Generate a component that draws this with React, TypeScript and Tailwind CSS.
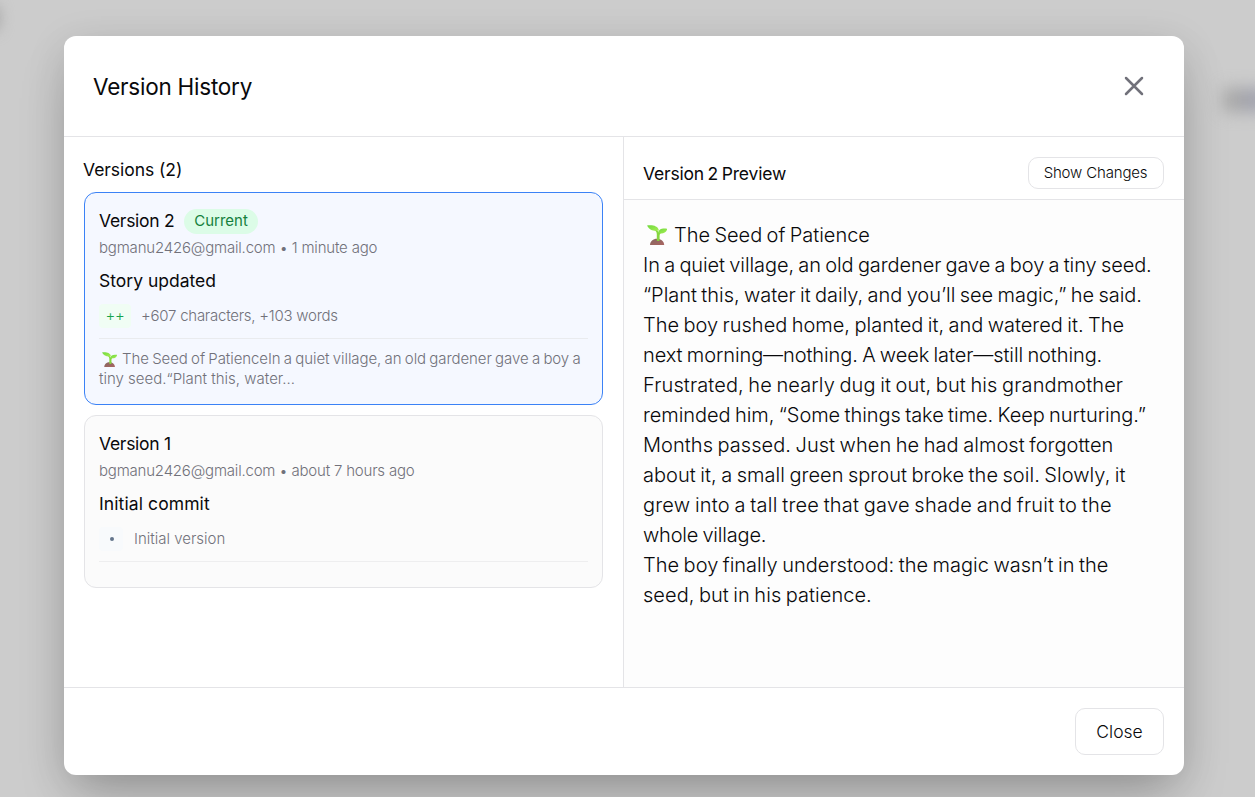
import { useId } from "react";

function Seedling({ className }: { className: string }) {
  const id = useId();
  return (
    <svg viewBox="0 0 20 20" className={className} aria-hidden="true">
      <defs>
        <linearGradient id={id + "l"} x1="0" y1="0" x2="1" y2="1">
          <stop offset="0" stopColor="#6fd83c" />
          <stop offset="1" stopColor="#a6ee55" />
        </linearGradient>
        <linearGradient id={id + "s"} x1="0" y1="0" x2="1" y2="1">
          <stop offset="0" stopColor="#846861" />
          <stop offset="1" stopColor="#ab6561" />
        </linearGradient>
      </defs>
      <path d="M3 20c0-3.800 3.200-6.300 7-6.300s7.200 2.500 7.200 6.300z" fill={`url(#${id}s)`} />
      <path d="M9.800 15.500V9C9.800 6.500 8 5 6 4l.6-1c2.600 1 4.400 2.600 5 4.600 1-.9 2.200-1.200 3.600-1.200l.3 1c-1.700.4-2.900 1.300-2.900 3.200v4.900c-.8.700-2 .7-2.800 0z" fill="#86d63f" />
      <path d="M0 .500C4.500-.300 10.800.200 12 5.500 7.500 6.500 2.500 5.500 0 .500z" fill={`url(#${id}l)`} />
      <path d="M20.300 3.800c-4.800-.8-8.700.1-9.300 4.200 4.300 1.200 8.200.2 9.300-4.200z" fill={`url(#${id}l)`} />
    </svg>
  );
}

const story = [
  { text: "In a quiet village, an old gardener gave a boy a tiny seed.", track: "tracking-[-0.09px]" },
  { text: "“Plant this, water it daily, and you’ll see magic,” he said.", track: "tracking-[-0.03px]" },
  { text: "The boy rushed home, planted it, and watered it. The", track: "tracking-[0px]" },
  { text: "next morning—nothing. A week later—still nothing.", track: "tracking-[-0.09px]" },
  { text: "Frustrated, he nearly dug it out, but his grandmother", track: "tracking-[0.11px]" },
  { text: "reminded him, “Some things take time. Keep nurturing.”", track: "tracking-[-0.05px]" },
  { text: "Months passed. Just when he had almost forgotten", track: "tracking-[0.055px]" },
  { text: "about it, a small green sprout broke the soil. Slowly, it", track: "tracking-[0.04px]" },
  { text: "grew into a tall tree that gave shade and fruit to the", track: "tracking-[0.21px]" },
  { text: "whole village.", track: "tracking-[-0.2px]" },
  { text: "The boy finally understood: the magic wasn’t in the", track: "tracking-[0.02px]" },
  { text: "seed, but in his patience.", track: "tracking-[0.05px]" },
];

export default function App() {
  return (
    <div className="relative flex h-[797px] w-[1255px] items-start overflow-hidden bg-[#cccccc] pl-16 pt-9 font-['Inter',sans-serif] text-[#09090b]">
      <div className="absolute -left-5 top-1 h-7 w-5 rounded-full bg-[#a8a8a8] blur-[7px]" />
      <div className="absolute -right-3 top-[88px] flex h-6 w-11 blur-[8px]">
        <div className="w-5 bg-[#a8a8a8]" />
        <div className="w-6 bg-[#a2a3ae]" />
      </div>

      <div className="relative flex h-[739px] w-[1120px] flex-col overflow-hidden rounded-xl bg-white shadow-[0_25px_50px_-12px_rgba(0,0,0,0.25),0_8px_40px_rgba(0,0,0,0.1)]">
        <header className="flex h-[101px] shrink-0 items-center justify-between border-b border-[#e4e4e7] pl-[29px] pr-10">
          <h2 className="whitespace-nowrap pt-0.5 text-[22.5px] tracking-[-0.23px]">Version History</h2>
          <button aria-label="Close dialog" className="text-[#71717a]">
            <svg viewBox="0 0 20 20" className="size-5" fill="none" stroke="currentColor" strokeWidth="2.5" strokeLinecap="round">
              <path d="M2 2l16 16M18 2L2 18" />
            </svg>
          </button>
        </header>

        <div className="flex h-[550px] shrink-0">
          <section className="flex w-[560px] flex-col border-r border-[#e4e4e7] px-5 pt-5">
            <h3 className="-ml-px h-[35px] whitespace-nowrap text-[17.5px] leading-[26px] tracking-[-0.05px]">Versions (2)</h3>

            <article className="h-[213px] rounded-[12px] border border-[#3b82f6] bg-[#f5f8ff] px-[14px] pt-[15px]">
              <div className="flex h-[26px] items-center">
                <span className="w-[85px] whitespace-nowrap text-[17.5px] tracking-[-0.28px]">Version 2</span>
                <span className="flex h-[25px] w-[74px] items-center justify-center rounded-full bg-[#dcfce7] text-[15px] tracking-[0px] text-[#15803d]">Current</span>
              </div>
              <p className="mt-px whitespace-nowrap text-[15px] font-light leading-[25px] tracking-[-0.19px] text-[#71717a]">bgmanu2426@gmail.com • 1 minute ago</p>
              <p className="mt-2 whitespace-nowrap text-[17.5px] leading-[26px] tracking-[0px]">Story updated</p>
              <div className="mt-[10px] flex h-6 items-center text-[15px]">
                <span className="flex h-6 w-8 items-center justify-center rounded bg-[#f0fdf4] font-light tracking-[-0.4px] text-[#16a34a]">++</span>
                <span className="ml-[10px] whitespace-nowrap font-light tracking-[-0.25px] text-[#71717a]">+607 characters, +103 words</span>
              </div>
              <div className="mt-[10px] border-t border-[#e9ebee] pt-[10px] text-[15px] font-light leading-5 text-[#71717a]">
                <p className="flex items-center whitespace-nowrap tracking-[-0.08px] [word-spacing:-0.8px]">
                  <Seedling className="ml-[3px] mr-[5px] size-[15px]" />
                  The Seed of PatienceIn a quiet village, an old gardener gave a boy a
                </p>
                <p className="whitespace-nowrap tracking-[0px]">tiny seed.“Plant this, water...</p>
              </div>
            </article>

            <article className="mt-[10px] h-[173px] rounded-[12px] border border-[#e4e4e7] bg-[#fbfbfb] px-[14px] pt-[15px]">
              <p className="whitespace-nowrap text-[17.5px] leading-[26px] tracking-[-0.28px]">Version 1</p>
              <p className="mt-px whitespace-nowrap text-[15px] font-light leading-[25px] tracking-[-0.2px] text-[#71717a]">bgmanu2426@gmail.com • about 7 hours ago</p>
              <p className="mt-2 whitespace-nowrap text-[17.5px] leading-[26px] tracking-[0.1px]">Initial commit</p>
              <div className="mt-[10px] flex h-6 items-center text-[15px] text-[#71717a]">
                <span className="flex h-6 w-6 items-center justify-center rounded bg-[#f8fafc] pl-px">
                  <span className="size-1 rounded-full bg-[#64748b]" />
                </span>
                <span className="ml-[11px] whitespace-nowrap font-light tracking-[0px]">Initial version</span>
              </div>
              <div className="mt-[10px] border-t border-[#eeeeef]" />
            </article>
          </section>

          <section className="flex flex-1 flex-col">
            <div className="flex h-[63px] shrink-0 items-start justify-between border-b border-[#e4e4e7] pl-[19px] pr-5 pt-5">
              <h3 className="whitespace-nowrap pt-1 text-[17.5px] leading-[26px] tracking-[-0.2px] [word-spacing:-1px]">Version 2 Preview</h3>
              <button className="flex h-8 w-[136px] items-center justify-center whitespace-nowrap rounded-[10px] border border-[#e4e4e7] bg-white pr-px text-[15px] font-light tracking-[-0.16px]">Show Changes</button>
            </div>
            <div className="flex-1 bg-[#fdfdfd] pl-[19px] pt-5 text-[20px] font-light leading-[30px] [word-spacing:-1.2px]">
              <p className="flex items-center whitespace-nowrap tracking-[-0.02px]">
                <Seedling className="ml-1 mr-[7px] size-5" />
                The Seed of Patience
              </p>
              {story.map((line) => (
                <p key={line.text} className={`whitespace-nowrap ${line.track}`}>{line.text}</p>
              ))}
            </div>
          </section>
        </div>

        <footer className="flex flex-1 items-start justify-end border-t border-[#e4e4e7] pr-5 pt-5">
          <button className="flex h-[47px] w-[89px] items-center justify-center rounded-[10px] border border-[#e4e4e7] bg-white pt-px text-[17.5px] font-light tracking-[0px]">Close</button>
        </footer>
      </div>
    </div>
  );
}
